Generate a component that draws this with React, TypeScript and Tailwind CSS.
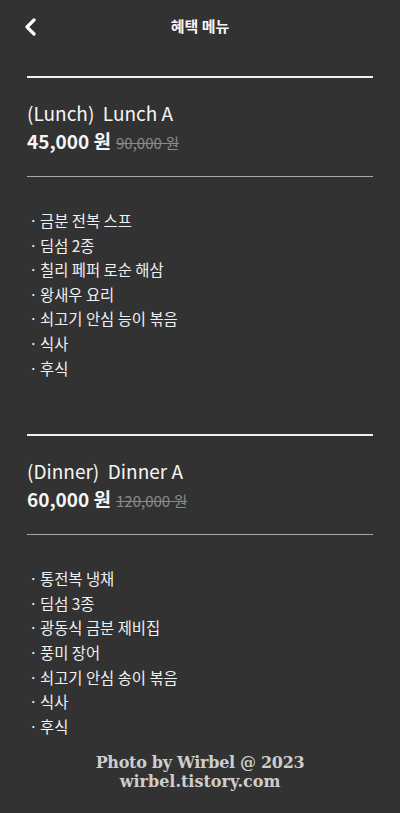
import React from "react";

const FONT = { fontFamily: '"Noto Sans CJK KR", "Noto Sans", sans-serif' };

interface Course {
  label: string;
  name: string;
  price: string;
  original: string;
  items: string[];
}

const courses: Course[] = [
  {
    label: "(Lunch)",
    name: "Lunch A",
    price: "45,000 원",
    original: "90,000 원",
    items: ["금분 전복 스프", "딤섬 2종", "칠리 페퍼 로순 해삼", "왕새우 요리", "쇠고기 안심 능이 볶음", "식사", "후식"],
  },
  {
    label: "(Dinner)",
    name: "Dinner A",
    price: "60,000 원",
    original: "120,000 원",
    items: ["통전복 냉채", "딤섬 3종", "광동식 금분 제비집", "풍미 장어", "쇠고기 안심 송이 볶음", "식사", "후식"],
  },
];

function CourseBlock({ course }: { course: Course }) {
  return (
    <section className="pb-[54px]">
      <div className="h-[2px] bg-[#f2f2f2]" />
      <h2 className="mt-[21px] text-[19px] leading-[28px] text-[#f5f5f5]">
        {course.label}&nbsp; {course.name}
      </h2>
      <div className="flex items-baseline gap-[5px] leading-[28px]">
        <span className="text-[19px] font-bold text-[#f5f5f5]">{course.price}</span>
        <span className="text-[15px] text-[#8a8a8a] line-through">{course.original}</span>
      </div>
      <div className="mt-[19px] h-px bg-[#a8a8a8]" />
      <ul className="mt-[31px]">
        {course.items.map((item) => (
          <li key={item} className="flex text-[15.4px] leading-[24.6px] text-[#f0f0f0]">
            <span className="w-[13px] pl-[2px]">·</span>
            <span>{item}</span>
          </li>
        ))}
      </ul>
    </section>
  );
}

export default function App() {
  return (
    <div className="min-h-[813px] bg-[#323232]" style={FONT}>
      <header className="relative flex h-[52px] items-center justify-center">
        <button className="absolute left-[21px] top-[16px] p-[2px]" aria-label="back">
          <svg width="14" height="18" viewBox="0 0 14 18" fill="none">
            <path d="M11 2 L4 9 L11 16" stroke="#fff" strokeWidth="3.2" strokeLinecap="round" strokeLinejoin="round" />
          </svg>
        </button>
        <h1 className="text-[15px] font-bold text-[#f5f5f5]">혜택 메뉴</h1>
      </header>
      <main className="px-[27px] pt-[24px]">
        {courses.map((c) => (
          <CourseBlock key={c.label} course={c} />
        ))}
      </main>
      <footer
        className="-mt-[39px] text-center text-[16px] font-bold leading-[19px] text-[#cdcdcd]"
        style={{ fontFamily: '"DejaVu Serif", "Liberation Serif", serif' }}
      >
        <div className="tracking-[-0.3px]">Photo by Wirbel @ 2023</div>
        <div>wirbel.tistory.com</div>
      </footer>
    </div>
  );
}
